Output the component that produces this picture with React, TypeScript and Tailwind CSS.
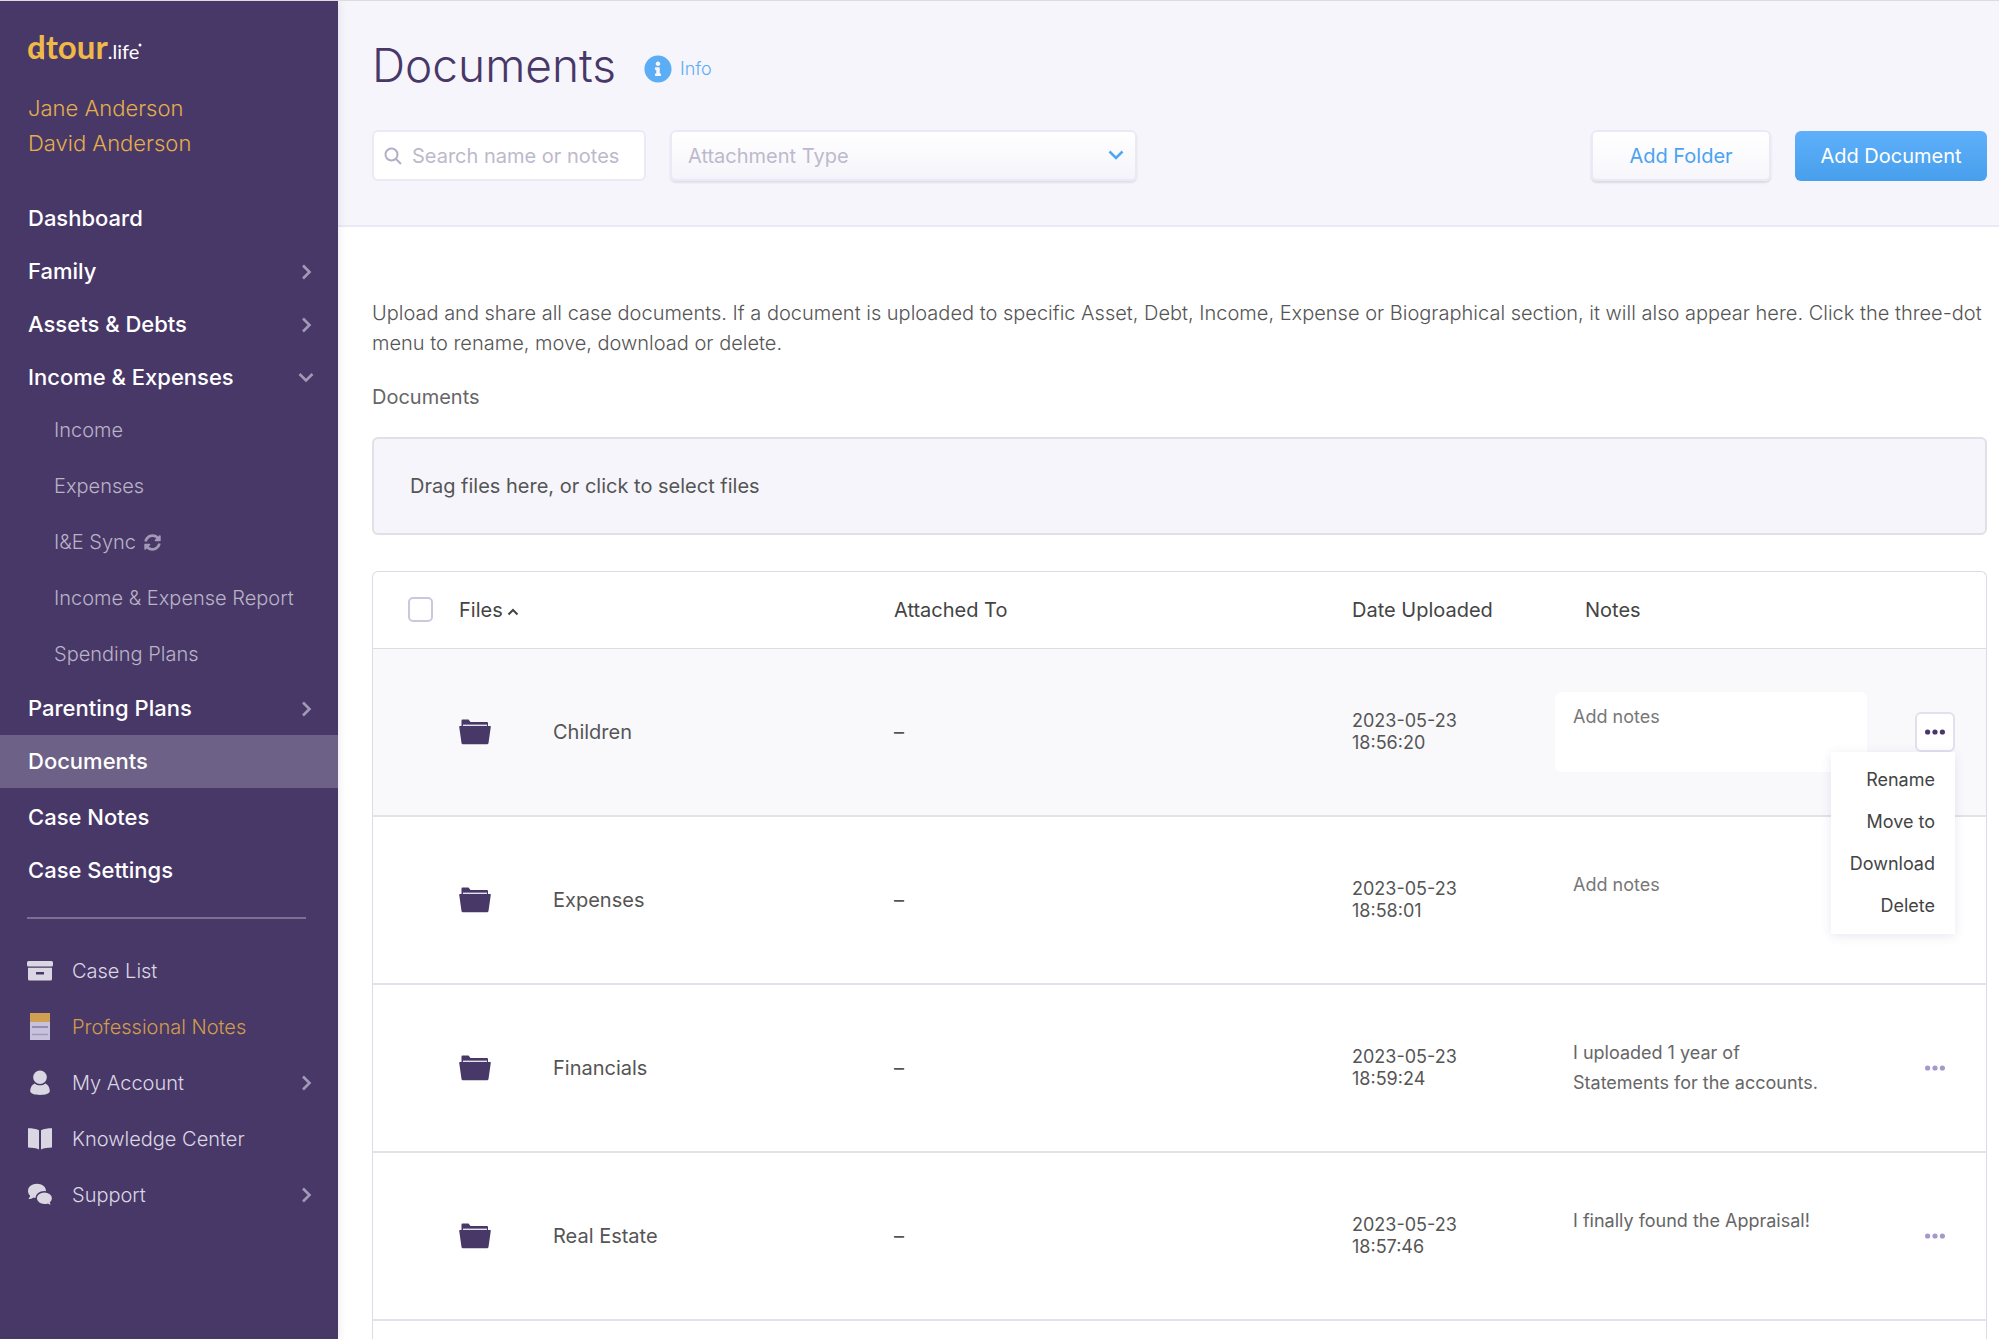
import React from "react";
import { FaInfoCircle, FaSyncAlt } from "react-icons/fa";

interface NavItem {
  label: string;
  arrow?: "right" | "down";
  active?: boolean;
  children?: { label: string; sync?: boolean }[];
}

interface DocumentRow {
  name: string;
  date: string;
  time: string;
  notes: string;
}

const caseNav: NavItem[] = [
  { label: "Dashboard" },
  { label: "Family", arrow: "right" },
  { label: "Assets & Debts", arrow: "right" },
  {
    label: "Income & Expenses",
    arrow: "down",
    children: [
      { label: "Income" },
      { label: "Expenses" },
      { label: "I&E Sync", sync: true },
      { label: "Income & Expense Report" },
      { label: "Spending Plans" },
    ],
  },
  { label: "Parenting Plans", arrow: "right" },
  { label: "Documents", active: true },
];

const settingsNav: NavItem[] = [
  { label: "Case Notes" },
  { label: "Case Settings" },
];

const rows: DocumentRow[] = [
  { name: "Children", date: "2023-05-23", time: "18:56:20", notes: "" },
  { name: "Expenses", date: "2023-05-23", time: "18:58:01", notes: "" },
  {
    name: "Financials",
    date: "2023-05-23",
    time: "18:59:24",
    notes: "I uploaded 1 year of\nStatements for the accounts.",
  },
  {
    name: "Real Estate",
    date: "2023-05-23",
    time: "18:57:46",
    notes: "I finally found the Appraisal!",
  },
];

const menuActions = ["Rename", "Move to", "Download", "Delete"];

const Chevron = ({ direction }: { direction: "right" | "down" }) => (
  <svg
    viewBox="0 0 16 16"
    className="w-4 h-4 text-[#a199b5]"
    fill="none"
    stroke="currentColor"
    strokeWidth="2.6"
  >
    {direction === "right" ? (
      <path d="M5 1.5 11.5 8 5 14.5" />
    ) : (
      <path d="M1.5 4 8 10.5 14.5 4" />
    )}
  </svg>
);

const ArchiveIcon = () => (
  <svg viewBox="0 0 26 20" className="w-[26px] h-5" fill="#dad7e2">
    <rect x="0" y="0" width="26" height="5.5" rx="1.5" />
    <path
      fillRule="evenodd"
      d="M1 6.8h24V18a1.5 1.5 0 0 1-1.5 1.5h-21A1.5 1.5 0 0 1 1 18zM9 11v2.4h8V11z"
    />
  </svg>
);

const NotesIcon = () => (
  <svg viewBox="0 0 26 28" className="w-[26px] h-7">
    <rect x="3" y="0" width="20" height="27" fill="#c8c1dc" />
    <rect x="3" y="0" width="20" height="9" fill="#cf9f52" />
    <path d="M5 14h16" stroke="#82769f" strokeWidth="1.4" />
    <path d="M5 21.5h16" stroke="#a298ba" strokeWidth="1.4" />
  </svg>
);

const PersonIcon = () => (
  <svg viewBox="0 0 26 26" className="w-[26px] h-[26px]" fill="#dad7e2">
    <circle cx="13" cy="7.3" r="6.8" />
    <path d="M7.6 13.4c3 2.6 7.8 2.6 10.8 0 2.8 1.4 4.4 4.4 4.4 7.6 0 3-5 3.9-9.800 3.900s-9.800-.9-9.800-3.900c0-3.200 1.600-6.200 4.400-7.600z" />
  </svg>
);

const BookIcon = () => (
  <svg viewBox="0 0 26 24" className="w-[26px] h-6" fill="#dad7e2">
    <path d="M1 1.2C5 1.2 9 1.8 12 3.2V22.5C9 21.3 5 20.6 1 20.6z" />
    <path d="M25 1.2C21 1.2 17 1.8 14 3.2V22.5c3-1.2 7-1.9 11-1.9z" />
  </svg>
);

const ChatIcon = () => (
  <svg viewBox="0 0 26 24" className="w-[26px] h-6" fill="#dad7e2">
    <path d="M10 .8c5 0 9 3.1 9 7.1s-4 7.1-9 7.1c-1.3 0-2.5-.2-3.6-.6-1.3 1-3 1.7-5 1.7 1-1 1.6-2.2 1.7-3.5C1.7 11.3 1 9.700 1 7.900 1 3.900 5 .8 10 .8z" />
    <path
      stroke="#483868"
      strokeWidth="1.6"
      d="M17.4 8.8c4.6 0 8.3 2.9 8.3 6.5 0 1.7-.8 3.1-2 4.3.2 1.3.7 2.4 1.6 3.3-1.8 0-3.3-.6-4.5-1.5-1 .3-2.2.5-3.4.5-4.6 0-8.3-2.9-8.3-6.6s3.7-6.500 8.300-6.500z"
    />
  </svg>
);

const FolderIcon = () => (
  <svg viewBox="0 0 32 26" className="w-8 h-[26px]" fill="#483868">
    <path d="M2.5 7V1.500a1 1 0 0 1 1-1h6l2 2.500H28a1 1 0 0 1 1 1v3z" />
    <path d="M4 5.600h24v1.600H4z" fill="#e4e1ec" />
    <path d="M.8 7h30.400a.6.6 0 0 1 .6.700L29.500 24a1.500 1.500 0 0 1-1.500 1.300H4A1.500 1.500 0 0 1 2.500 24L.2 7.700A.6.6 0 0 1 .8 7z" />
  </svg>
);

const DotsIcon = () => (
  <svg viewBox="0 0 20 6" className="w-5 h-[6px]" fill="currentColor">
    <circle cx="2.6" cy="3" r="2.6" />
    <circle cx="10" cy="3" r="2.6" />
    <circle cx="17.4" cy="3" r="2.6" />
  </svg>
);

const accountNav = [
  { label: "Case List", icon: <ArchiveIcon /> },
  { label: "Professional Notes", icon: <NotesIcon />, highlight: true },
  { label: "My Account", icon: <PersonIcon />, arrow: true },
  { label: "Knowledge Center", icon: <BookIcon /> },
  { label: "Support", icon: <ChatIcon />, arrow: true },
];

const NavLink: React.FC<{ item: NavItem }> = ({ item }) => (
  <li>
    <a
      href="#"
      className={`flex items-center justify-between h-[53px] pl-7 pr-6 text-[22px] font-medium text-white ${
        item.active ? "bg-[#6d6187]" : ""
      }`}
    >
      {item.label}
      {item.arrow && <Chevron direction={item.arrow} />}
    </a>
    {item.children && (
      <ul className="-mt-[2px]">
        {item.children.map((child) => (
          <li key={child.label}>
            <a
              href="#"
              className="flex items-center gap-2 h-14 pl-[54px] text-xl font-light text-[#b9b3c5]"
            >
              {child.label}
              {child.sync && <FaSyncAlt className="w-[17px] h-[17px] text-[#a199b5]" />}
            </a>
          </li>
        ))}
      </ul>
    )}
  </li>
);

const Sidebar = () => (
  <aside className="relative z-10 w-[338px] shrink-0 bg-[#483868] shadow-[0_0_8px_rgba(72,56,104,0.15)]">
    {/* Logo */}
    <a
      href="#"
      className="relative flex items-baseline w-fit ml-[27px] mt-[25px] h-10 font-[Lato,sans-serif] leading-10"
    >
      <span className="text-[33px] font-bold text-[#efb848]">dtour</span>
      <span className="text-xl text-white">.life</span>
      <svg viewBox="0 0 116 40" className="absolute left-0 top-0 w-[116px] h-10">
        <path d="M9 26h8v8z" fill="#efb848" />
        <circle cx="113" cy="19" r="1.5" fill="#ffffff" />
      </svg>
    </a>

    <div className="mt-[25px] pl-7 text-[22px] leading-[35px] font-light text-[#e3ae4b]">
      <p>Jane Anderson</p>
      <p>David Anderson</p>
    </div>

    <nav className="mt-[31px]">
      <ul>
        {caseNav.map((item) => (
          <NavLink key={item.label} item={item} />
        ))}
      </ul>
      <ul className="mt-[3px]">
        {settingsNav.map((item) => (
          <NavLink key={item.label} item={item} />
        ))}
      </ul>

      <hr className="mt-5 ml-[27px] mr-8 border-t-2 border-[#7b7094]" />

      <ul className="mt-6">
        {accountNav.map((item) => (
          <li key={item.label}>
            <a
              href="#"
              className={`flex items-center h-14 pl-[27px] pr-6 text-xl font-light ${
                item.highlight ? "text-[#cf9c4c]" : "text-[#dad7e2]"
              }`}
            >
              {item.icon}
              <span className="ml-[19px] flex-1">{item.label}</span>
              {item.arrow && <Chevron direction="right" />}
            </a>
          </li>
        ))}
      </ul>
    </nav>
  </aside>
);

const Header = () => (
  <header className="h-[226px] shrink-0 pl-[34px] pr-3 pt-[34px] bg-[#f6f5fb] border-b-2 border-[#ebe9f6]">
    <div className="flex items-center">
      <h1 className="text-[46px] leading-[60px] font-light text-[#483868]">Documents</h1>
      <a href="#" className="flex items-center gap-2 ml-7 mt-2 text-lg font-light text-[#5badf5]">
        <FaInfoCircle className="w-7 h-7" />
        Info
      </a>
    </div>

    <div className="flex items-center mt-[35px]">
      <label className="flex items-center gap-[10px] w-[274px] h-[51px] px-[10px] bg-white border-2 border-[#ebe9f6] rounded-md">
        <svg
          viewBox="0 0 18 18"
          className="w-[18px] h-[18px] shrink-0"
          fill="none"
          stroke="#b3aec6"
          strokeWidth="2"
        >
          <circle cx="7.5" cy="7.5" r="6" />
          <path d="m12 12 5 5" />
        </svg>
        <input
          type="text"
          aria-label="Search name or notes"
          placeholder="Search name or notes"
          className="w-full min-w-0 bg-transparent text-xl outline-none placeholder:text-[#bdb9cc]"
        />
      </label>

      <div className="relative ml-6 w-[467px]">
        <select
          aria-label="Attachment Type"
          className="w-full h-[51px] pl-4 pr-10 appearance-none text-xl text-[#bdb9cc] bg-linear-to-b from-white to-[#f5f4fa] border-2 border-[#ebe9f6] rounded-md shadow-[0_2px_2px_rgba(72,56,104,0.12)]"
        >
          <option>Attachment Type</option>
        </select>
        <svg
          viewBox="0 0 16 10"
          className="absolute right-[13px] top-5 w-4 h-[10px] pointer-events-none"
          fill="none"
          stroke="#4fa6f3"
          strokeWidth="2.5"
        >
          <path d="m1.500 1.500 6.500 6.500 6.500-6.500" />
        </svg>
      </div>

      <button className="ml-auto w-[180px] h-[51px] text-xl text-[#4aa3f0] bg-linear-to-b from-white to-[#f7f6fb] border-2 border-[#ebe9f6] rounded-md shadow-[0_2px_2px_rgba(72,56,104,0.15)]">
        Add Folder
      </button>
      <button className="ml-6 w-48 h-[50px] text-xl text-white bg-linear-to-b from-[#5fb0fa] to-[#479fec] rounded-md">
        Add Document
      </button>
    </div>
  </header>
);

const ActionsCell: React.FC<{ open: boolean }> = ({ open }) => (
  <div className="relative flex justify-end pr-[31px]">
    <button
      aria-label="Actions"
      className={`flex items-center justify-center w-10 h-10 rounded-md border-2 ${
        open ? "bg-white border-[#e2e0ec] text-[#483868]" : "border-transparent text-[#a598cd]"
      }`}
    >
      <DotsIcon />
    </button>
    {open && (
      <div className="absolute right-[31px] top-10 z-10 w-[124px] py-[7px] bg-white shadow-[0_2px_10px_rgba(72,56,140,0.12)]">
        {menuActions.map((action) => (
          <button
            key={action}
            className="block w-full h-[42px] pr-5 text-right text-lg font-normal text-[#444444]"
          >
            {action}
          </button>
        ))}
      </div>
    )}
  </div>
);

const DocumentsTable = () => (
  <div className="mt-9 flex-1 border border-b-0 border-[#dcdbe7] rounded-t-md">
    <table className="w-full table-fixed border-collapse text-left text-xl text-[#555555]">
      <colgroup>
        <col className="w-[86px]" />
        <col className="w-[94px]" />
        <col className="w-[341px]" />
        <col />
        <col className="w-[203px]" />
        <col className="w-[330px]" />
        <col className="w-[101px]" />
      </colgroup>
      <thead>
        <tr className="h-[76px] border-b border-[#dcdbe7] text-[#444444]">
          <th className="pl-[35px]">
            <input
              type="checkbox"
              aria-label="Select all files"
              className="block w-[25px] h-[25px] appearance-none bg-white border-2 border-[#cbc7dc] rounded-[5px]"
            />
          </th>
          <th colSpan={2} className="font-normal">
            <button className="flex items-center gap-1">
              Files
              <svg
                viewBox="0 0 12 8"
                className="w-3 h-2 mt-1"
                fill="none"
                stroke="#444444"
                strokeWidth="2"
              >
                <path d="m1.500 6.500 4.500-4.500 4.500 4.500" />
              </svg>
            </button>
          </th>
          <th className="font-normal">Attached To</th>
          <th className="font-normal">Date Uploaded</th>
          <th className="pl-[30px] font-normal">Notes</th>
          <th></th>
        </tr>
      </thead>
      <tbody>
        {rows.map((row, index) => (
          <tr
            key={row.name}
            className={`h-[168px] border-b-2 border-[#e3e2ea] ${index === 0 ? "bg-[#f9f9fc]" : ""}`}
          >
            <td></td>
            <td>
              <FolderIcon />
            </td>
            <td>{row.name}</td>
            <td>–</td>
            <td className="text-lg leading-[22px]">
              {row.date}
              <br />
              {row.time}
            </td>
            <td>
              <textarea
                aria-label={`Notes for ${row.name}`}
                placeholder="Add notes"
                defaultValue={row.notes}
                className="block w-[312px] h-20 px-[18px] py-[10px] resize-none overflow-hidden bg-white rounded-md text-lg leading-[30px] text-[#666666] placeholder:text-[#777777]"
              />
            </td>
            <td>
              <ActionsCell open={index === 0} />
            </td>
          </tr>
        ))}
      </tbody>
    </table>
  </div>
);

const App: React.FC = () => {
  return (
    <div className="flex h-screen overflow-hidden border-t border-[#dcdcdf] bg-white font-[Inter,sans-serif]">
      <Sidebar />

      <div className="flex flex-col flex-1 min-w-0">
        <Header />

        <main className="flex flex-col flex-1 pl-[34px] pr-3 pt-[71px]">
          <p className="text-xl leading-[30px] font-light text-[#555555]">
            Upload and share all case documents. If a document is uploaded to specific Asset, Debt,
            Income, Expense or Biographical section, it will also appear here. Click the three-dot
            menu to rename, move, download or delete.
          </p>
          <h2 className="mt-6 text-xl leading-[30px] text-[#666666]">Documents</h2>

          {/* Drop zone */}
          <label className="flex items-center mt-[25px] h-[98px] shrink-0 px-9 bg-[#f6f5fb] border-2 border-[#e1e0e6] rounded-md text-xl text-[#555555]">
            Drag files here, or click to select files
            <input type="file" multiple className="sr-only" />
          </label>

          <DocumentsTable />
        </main>
      </div>
    </div>
  );
};

export default App;
